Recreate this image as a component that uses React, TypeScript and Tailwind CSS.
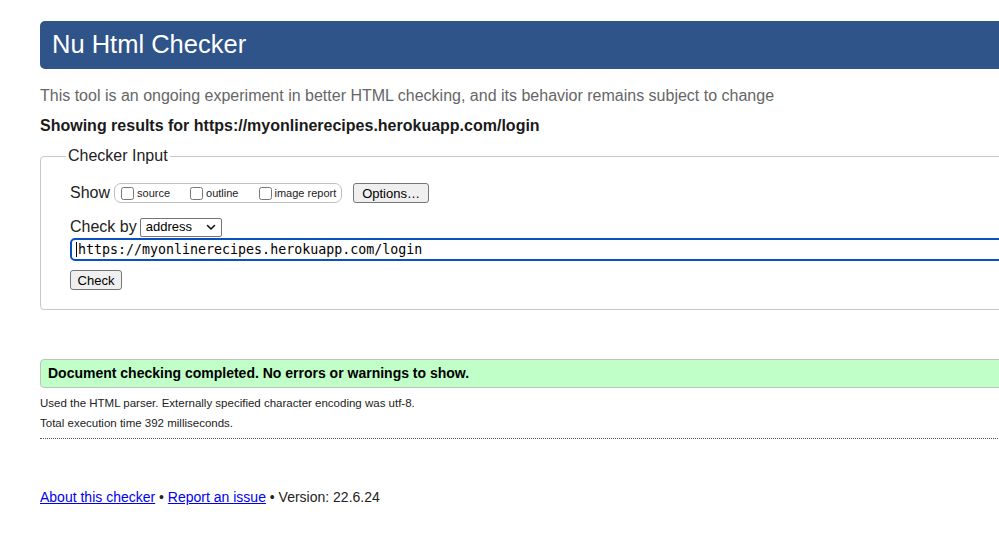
import React from 'react';

const App: React.FC = () => {
  return (
    <div className="w-[999px] h-[545px] overflow-hidden bg-white font-['Liberation_Sans',Arial,sans-serif] text-[#222]">
      <div className="pl-[40px] pt-[21px] w-[1100px]">
        <div className="h-[48px] bg-[#2f5489] rounded-l-[5px] flex items-center pl-[12px]">
          <h1 className="text-white text-[25.5px] leading-none">Nu Html Checker</h1>
        </div>

        <p className="mt-[17px] text-[16px] leading-[20px] text-[#666]">
          This tool is an ongoing experiment in better HTML checking, and its behavior remains subject to change
        </p>
        <p className="mt-[10px] text-[16px] leading-[20px] font-bold text-[#1a1a1a]">
          Showing results for https://myonlinerecipes.herokuapp.com/login
        </p>

        <fieldset className="mt-[10px] border border-[#c8c8c8] rounded-l-[4px] pl-[29px] pt-[17px] pb-[17px]">
          <legend className="ml-[-4px] px-[2px] text-[16px] leading-[20px] text-[#222]">Checker Input</legend>

          <div className="flex items-center h-[20px]">
            <span className="text-[16px] leading-[20px]">Show</span>
            <div className="ml-[4px] w-[228px] h-[20px] border border-[#c0c0c0] rounded-[7px] flex items-center pl-[6px] text-[11px]">
              <label className="flex items-center">
                <input type="checkbox" className="m-0 w-[13px] h-[13px]" />
                <span className="ml-[3px]">source</span>
              </label>
              <label className="flex items-center ml-[20px]">
                <input type="checkbox" className="m-0 w-[13px] h-[13px]" />
                <span className="ml-[3px]">outline</span>
              </label>
              <label className="flex items-center ml-[21px]">
                <input type="checkbox" className="m-0 w-[13px] h-[13px]" />
                <span className="ml-[2px]">image report</span>
              </label>
            </div>
            <button className="ml-[11px] h-[20px] w-[76px] border border-[#767676] rounded-[3px] bg-[#efefef] text-[13px] leading-none text-black">
              Options…
            </button>
          </div>

          <div className="flex items-center h-[20px] mt-[14px]">
            <span className="text-[16px] leading-[20px]">Check by</span>
            <div className="ml-[3px] w-[82px] h-[19px] border border-[#767676] rounded-[2px] flex items-center justify-between pl-[5px] pr-[5px] text-[13px] text-black">
              <span>address</span>
              <svg width="10" height="7" viewBox="0 0 10 7" fill="none">
                <path d="M1.5 1.5 L5 5 L8.5 1.5" stroke="#111" strokeWidth="1.6" strokeLinecap="round" strokeLinejoin="round" />
              </svg>
            </div>
          </div>

          <div className="mt-[1px] h-[23px] border-2 border-[#0b50c0] rounded-[5px] flex items-center pl-[4px]">
            <span className="w-px h-[15px] bg-black mr-[1px]" />
            <span className="font-['DejaVu_Sans_Mono',monospace] text-[13.3px] text-black">https://myonlinerecipes.herokuapp.com/login</span>
          </div>

          <button className="mt-[9px] h-[20px] w-[52px] border border-[#767676] rounded-[3px] bg-[#efefef] text-[13px] leading-none text-black">
            Check
          </button>
        </fieldset>

        <div className="mt-[49px] h-[29px] bg-[#c0ffc8] border border-[#c0c0c0] rounded-l-[4px] flex items-center pl-[7px]">
          <span className="text-[14px] font-bold text-black">Document checking completed. No errors or warnings to show.</span>
        </div>

        <p className="mt-[8px] text-[11.5px] leading-[14px] text-[#222]">Used the HTML parser. Externally specified character encoding was utf-8.</p>
        <p className="mt-[6px] text-[11.5px] leading-[14px] text-[#222]">Total execution time 392 milliseconds.</p>
        <div className="mt-[8px] border-b border-dotted border-[#555]" />

        <p className="mt-[49px] text-[14px] leading-[18px] text-[#222]">
          <a href="#" className="text-[#0000ee] underline">About this checker</a>
          {' • '}
          <a href="#" className="text-[#0000ee] underline">Report an issue</a>
          {' • Version: 22.6.24'}
        </p>
      </div>
    </div>
  );
};

export default App;
